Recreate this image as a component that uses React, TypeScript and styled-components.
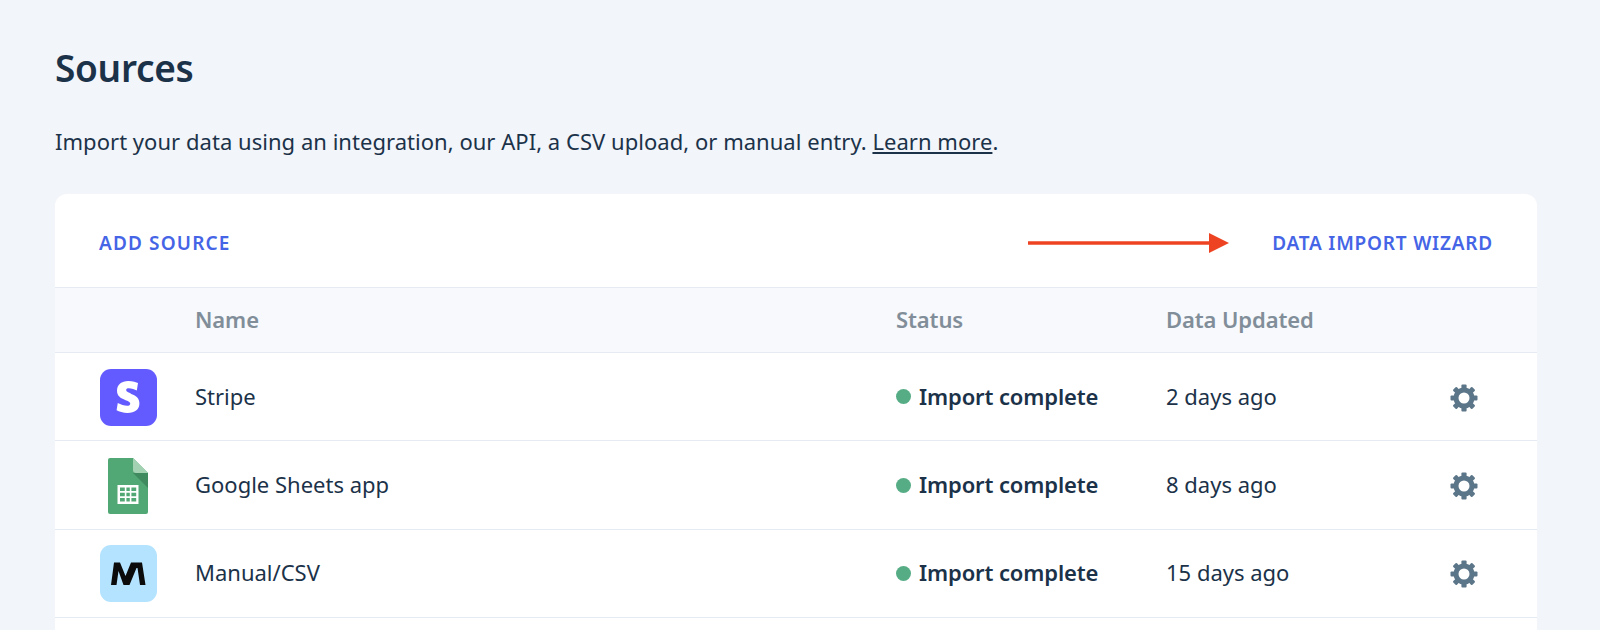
import React from 'react';
import styled, {createGlobalStyle} from 'styled-components';

type SourceP = {
    name:string,
    updated:string,
    logo:React.ReactNode
};

const GlobalStyle = createGlobalStyle`
  html, body {
    margin: 0;
    height: 630px;
    overflow: hidden;
    background: #f2f5fa;
  }
  body {
    font-family: "Noto Sans", "Open Sans", sans-serif;
    color: #1b3249;
  }
`;

const Page = styled.div`
  height: 630px;
  padding: 44px 63px 0 55px;
  box-sizing: border-box;
  overflow: hidden;
`;

const Title = styled.h1`
  margin: 0;
  font-size: 37px;
  line-height: 48px;
  font-weight: 600;
  letter-spacing: -0.3px;
  color: #1b3249;
`;

const Intro = styled.p`
  margin: 34px 0 0;
  font-size: 22px;
  line-height: 30px;
  letter-spacing: 0.035px;
`;

const Learn = styled.a`
  color: inherit;
  text-decoration: underline;
`;

const Card = styled.div`
  margin-top: 38px;
  background: #fff;
  border-radius: 12px 12px 0 0;
  height: 500px;
`;

const Toolbar = styled.div`
  display: flex;
  align-items: center;
  justify-content: space-between;
  height: 93px;
  padding: 4px 44px 0;
  box-sizing: border-box;
`;

const ToolLink = styled.a<{$spacing:number}>`
  font-size: 19px;
  font-weight: 600;
  letter-spacing: ${props => props.$spacing}px;
  color: #4565e6;
`;

const WizardGroup = styled.div`
  display: flex;
  align-items: center;
  gap: 43px;
`;

const Row = styled.div<{$head?:boolean}>`
  display: grid;
  grid-template-columns: 140px 701px 270px 283px 1fr;
  align-items: center;
  height: ${props => props.$head ? '65px' : '88.4px'};
  box-sizing: border-box;
  background: ${props => props.$head ? '#f7f9fc' : '#fff'};
  border-top: 1px solid #e6eaf2;
  font-size: 22px;
`;

const HeadCell = styled.div`
  padding-bottom: 2px;
  font-weight: 600;
  letter-spacing: -0.1px;
  color: #818e99;
`;

const TextCell = styled.div`
  padding-bottom: 2px;
`;

const LogoCell = styled.div`
  display: flex;
  justify-content: center;
  padding: 1px 0 0 6px;
`;

const Status = styled.div`
  display: flex;
  align-items: center;
  gap: 8px;
  padding-bottom: 2px;
  font-weight: 600;
  letter-spacing: -0.13px;
`;

const Dot = styled.span`
  width: 15px;
  height: 15px;
  margin-top: 2px;
  border-radius: 50%;
  background: #56ad85;
`;

const GearCell = styled.div`
  display: flex;
  padding: 2px 0 0 1px;
`;

const LogoTile = styled.div<{$bg:string}>`
  display: flex;
  align-items: center;
  justify-content: center;
  width: 57px;
  height: 57px;
  border-radius: 11px;
  background: ${props => props.$bg};
`;

const StripeLogo = () => (
    <LogoTile $bg={'#635bff'}>
        <svg width="32" height="32" viewBox="0 0 24 24" fill="#fff">
            <path d="M13.976 9.15c-2.172-.806-3.356-1.426-3.356-2.409 0-.831.683-1.305 1.901-1.305 2.227 0 4.515.858 6.09 1.631l.89-5.494C18.252.975 15.697 0 12.165 0 9.667 0 7.589.654 6.104 1.872 4.56 3.147 3.757 4.992 3.757 7.218c0 4.039 2.467 5.76 6.476 7.219 2.585.92 3.445 1.574 3.445 2.583 0 .98-.84 1.545-2.354 1.545-1.875 0-4.965-.921-6.99-2.109l-.9 5.555C5.175 22.99 8.385 24 11.714 24c2.641 0 4.843-.624 6.328-1.813 1.664-1.305 2.525-3.236 2.525-5.348 0-4.13-2.524-5.851-6.591-7.305z"/>
        </svg>
    </LogoTile>
);

const SheetsLogo = () => (
    <svg width="40" height="56" viewBox="0 0 40 56">
        <path d="M2 0h23l15 15v39a2 2 0 0 1-2 2H2a2 2 0 0 1-2-2V2a2 2 0 0 1 2-2z" fill="#52a874"/>
        <path d="M25 15l15 15V15z" fill="#3f8a5f"/>
        <path d="M25 0l15 15H28a3 3 0 0 1-3-3z" fill="#a3d2b3"/>
        <path d="M9.500 27h21v19h-21z" fill="#fff"/>
        <path d="M12 29.500h4.800v3.500H12zM18.400 29.500h3.400v3.500h-3.400zM23.400 29.500h4.800v3.500h-4.800zM12 34.800h4.800v3.500H12zM18.400 34.800h3.400v3.500h-3.400zM23.400 34.800h4.800v3.500h-4.800zM12 40h4.800v3.500H12zM18.400 40h3.400v3.500h-3.400zM23.400 40h4.800v3.500h-4.800z" fill="#52a874"/>
    </svg>
);

const ManualLogo = () => (
    <LogoTile $bg={'#b3e3ff'}>
        <svg width="35" height="23" viewBox="0 0 35 23" fill="#0b0b0b">
            <path d="M0 23L3 .5H9L14.500 14 20 .5H31L34.500 23H29L26.500 6H25.500L18.500 23H12.500L7.500 9 5.500 23z"/>
        </svg>
    </LogoTile>
);

const Gear = () => (
    <svg width="28" height="28" viewBox="0 0 28 28" fill="#5c7689">
        {[0, 45, 90, 135, 180, 225, 270, 315].map(angle => (
            <rect key={angle} x="11.400" y="0.500" width="5.200" height="6" rx="1" transform={`rotate(${angle} 14 14)`}/>
        ))}
        <circle cx="14" cy="14" r="8" fill="none" stroke="#5c7689" strokeWidth="5"/>
    </svg>
);

const Arrow = () => (
    <svg width="201" height="20" viewBox="0 0 201 20">
        <path d="M0 8.200h184v3.600H0z" fill="#ee4323"/>
        <path d="M181 0l20 10l-20 10z" fill="#ee4323"/>
    </svg>
);

const SourceRow = (props:SourceP) => {
    const {name, updated, logo} = props;
    return (
        <Row>
            <LogoCell>{logo}</LogoCell>
            <TextCell>{name}</TextCell>
            <Status><Dot/>Import complete</Status>
            <TextCell>{updated}</TextCell>
            <GearCell><Gear/></GearCell>
        </Row>
    );
};

export default function App() {
    return (
        <Page>
            <GlobalStyle/>
            <Title>Sources</Title>
            <Intro>
                Import your data using an integration, our API, a CSV upload, or manual entry. <Learn href="#">Learn more</Learn>.
            </Intro>
            <Card>
                <Toolbar>
                    <ToolLink $spacing={1.15}>ADD SOURCE</ToolLink>
                    <WizardGroup>
                        <Arrow/>
                        <ToolLink $spacing={0.8}>DATA IMPORT WIZARD</ToolLink>
                    </WizardGroup>
                </Toolbar>
                <Row $head>
                    <div/>
                    <HeadCell>Name</HeadCell>
                    <HeadCell>Status</HeadCell>
                    <HeadCell>Data Updated</HeadCell>
                    <div/>
                </Row>
                <SourceRow name={'Stripe'} updated={'2 days ago'} logo={<StripeLogo/>}/>
                <SourceRow name={'Google Sheets app'} updated={'8 days ago'} logo={<SheetsLogo/>}/>
                <SourceRow name={'Manual/CSV'} updated={'15 days ago'} logo={<ManualLogo/>}/>
                <Row/>
            </Card>
        </Page>
    );
}
